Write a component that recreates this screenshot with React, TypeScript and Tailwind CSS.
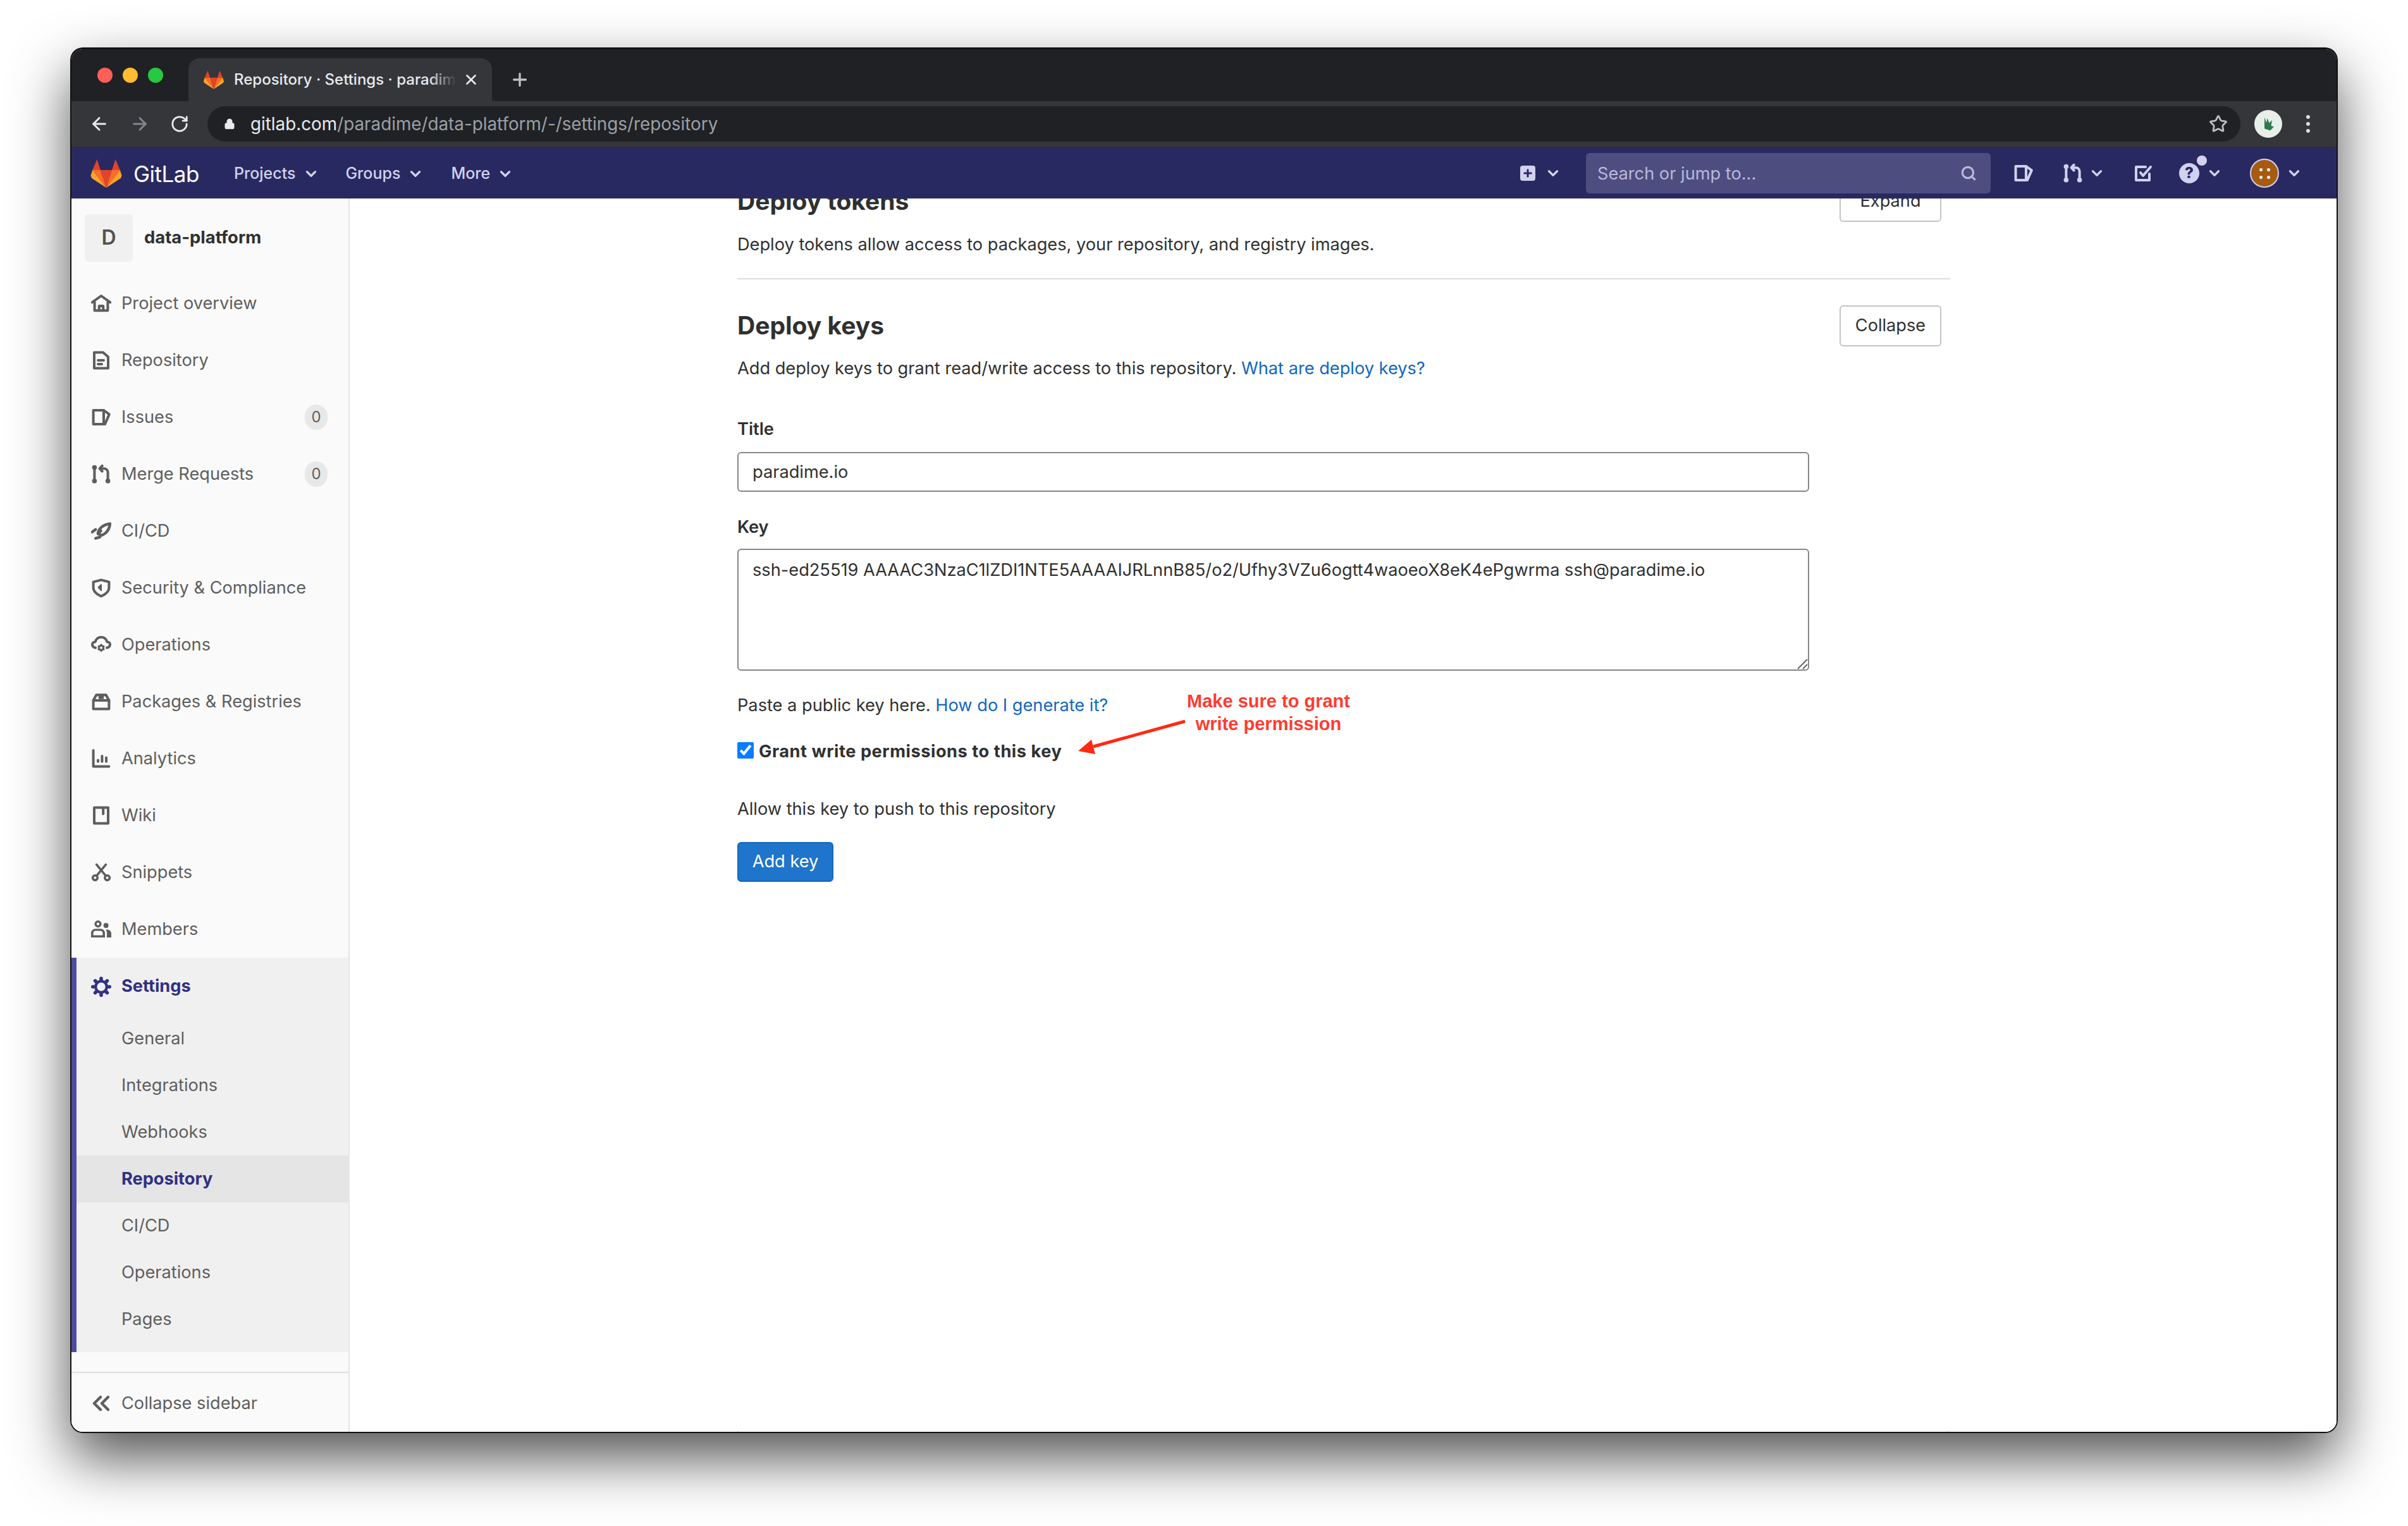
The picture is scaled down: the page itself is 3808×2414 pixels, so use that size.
import React from 'react';
import { ArrowLeft, ArrowRight, RotateCw, Lock, Star, Plus, X, Search, ChevronDown } from 'lucide-react';

type IconProps = { className?: string };

const Svg: React.FC<React.PropsWithChildren<{ className?: string; sw?: number }>> = ({ className, sw = 2, children }) => (
  <svg viewBox="0 0 16 16" fill="none" stroke="currentColor" strokeWidth={sw} strokeLinecap="round" strokeLinejoin="round" className={className}>
    {children}
  </svg>
);

const HomeIcon = ({ className }: IconProps) => (
  <Svg className={className}>
    <path d="M.8 7.2 8 2l7.2 5.2" />
    <path d="M2.8 7v6.6h10.4V7" />
    <path d="M6.4 13.6V10h3.2v3.6" />
  </Svg>
);
const DocIcon = ({ className }: IconProps) => (
  <Svg className={className}>
    <path d="M2.5 1.8h7l4 3.4v9h-11z" />
    <path d="M5.5 8h4.5M5.5 11h3" />
  </Svg>
);
const IssuesIcon = ({ className }: IconProps) => (
  <Svg className={className}>
    <path d="M1.8 2.5h8.2v11H1.8z" />
    <path d="M10 2.5l4.4 3.2-3.4 7.8" />
  </Svg>
);
const MergeIcon = ({ className }: IconProps) => (
  <Svg className={className}>
    <circle cx="2.7" cy="2.8" r=".9" />
    <circle cx="2.7" cy="13.4" r=".9" />
    <circle cx="13.3" cy="13.4" r=".9" />
    <path d="M2.7 3.5v9.2" />
    <path d="M8 3.6h2.2c1.8 0 3.1 1.2 3.1 3v6" />
    <path d="M8.8 1.4 6.8 3.6l2 2.2" />
  </Svg>
);
const RocketIcon = ({ className }: IconProps) => (
  <Svg className={className} sw={2.2}>
    <path d="M5.4 9.6C6.5 5.5 10 3 15 2.2c-.6 4.8-3 8-7.1 9.3z" />
    <path d="M1 8.8l2.6-2M3.6 13.8l3.4-1" />
    <path d="M5.6 10.4l2.2-2.6" />
  </Svg>
);
const ShieldIcon = ({ className }: IconProps) => (
  <Svg className={className}>
    <path d="M8 1.7 14.2 3.3V8c0 3-2.6 5-6.2 6.6C4.4 13 1.8 11 1.8 8V3.3z" />
    <path d="M8 5.5 5.8 7.5 8 10z" fill="currentColor" strokeWidth="1" />
  </Svg>
);
const CloudIcon = ({ className }: IconProps) => (
  <Svg className={className}>
    <path d="M3.5 10.4C1.6 10 1 8.8 1 7.9c0-1.3 1.1-2.3 2.4-2.3C3.9 3.3 5.8 2 8 2s4.1 1.3 4.6 3.6c1.3 0 2.4 1 2.4 2.3 0 .9-.6 2.1-2.5 2.5" />
    <circle cx="8" cy="10.4" r="1.8" strokeWidth="1.6" />
    <path d="M8 7.8v.5M8 12.500v.5M5.8 9.100l.4.3M9.800 11.400l.4.3M5.8 11.700l.4-.3M9.800 9.400l.4-.3" strokeWidth="1.2" />
  </Svg>
);
const PackageIcon = ({ className }: IconProps) => (
  <Svg className={className}>
    <path d="M1.8 7v6.8h12.4V7L11.8 2.6H4.2z" />
    <path d="M1.8 7h12.4" />
    <path d="M6.4 2.6h3.2v2.8H6.4z" strokeWidth="1" fill="currentColor" />
  </Svg>
);
const ChartIcon = ({ className }: IconProps) => (
  <Svg className={className}>
    <path d="M1.8 1.5v12.7h12.4" />
    <path d="M5.5 9.2v1.2M8.7 6v4.4M12 7.2v3.2" />
  </Svg>
);
const BookIcon = ({ className }: IconProps) => (
  <Svg className={className}>
    <path d="M2.5 1.8h11v12.4h-11z" />
    <path d="M9.6 2v4.8" />
  </Svg>
);
const ScissorsIcon = ({ className }: IconProps) => (
  <Svg className={className} sw={1.8}>
    <circle cx="3.2" cy="12.3" r="1.9" />
    <circle cx="12.8" cy="12.3" r="1.9" />
    <path d="M4.3 1.8l7.3 8.9M11.7 1.8 4.4 10.7" />
  </Svg>
);
const MembersIcon = ({ className }: IconProps) => (
  <svg viewBox="0 0 16 16" fill="currentColor" className={className}>
    <path fillRule="evenodd" d="M5.5 1a2.8 2.8 0 1 1 0 5.6 2.8 2.8 0 0 1 0-5.6zm0 1.7a1.1 1.1 0 1 0 0 2.2 1.1 1.1 0 0 0 0-2.2z" />
    <circle cx="11.8" cy="5" r="2" />
    <path fillRule="evenodd" d="M0 14.5V11c0-2 1.6-3.4 3.6-3.4h3.8c2 0 3.6 1.4 3.6 3.4v3.5zm1.8-1.7h7.4V11c0-1-.8-1.7-1.8-1.7H3.6c-1 0-1.8.7-1.8 1.7z" />
    <path d="M11.7 8.2h.8c2 0 3.500 1.300 3.500 3.200v3.100h-3.500V11c0-1-.3-2-.8-2.800z" />
  </svg>
);
const CogIcon = ({ className }: IconProps) => (
  <Svg className={className} sw={2.1}>
    <circle cx="8" cy="8" r="4.4" />
    <path strokeWidth="2.8" d="M8 1.4v.4M8 14.2v.4M1.4 8h.4M14.2 8h.4M3.3 3.3l.3.3M12.4 12.4l.3.3M3.3 12.7l.3-.3M12.4 3.6l.3-.3" />
  </Svg>
);
const ChevronsIcon = ({ className }: IconProps) => (
  <Svg className={className} sw={2.2}>
    <path d="M7.5 3 2.5 8l5 5M13.5 3l-5 5 5 5" />
  </Svg>
);
const TodoIcon = ({ className }: IconProps) => (
  <Svg className={className}>
    <path d="M13 8.5V13.5H2.5V3H10" />
    <path d="M6 7.5 8 10l6-7" />
  </Svg>
);

const Tanuki = ({ className }: IconProps) => (
  <svg viewBox="0 0 32 30" className={className}>
    <polygon points="16,30 21.9,11.8 10.1,11.8" fill="#e24329" />
    <polygon points="16,30 10.1,11.8 1.8,11.8" fill="#fc6d26" />
    <polygon points="1.8,11.8 0,17.3 .9,20 16,30" fill="#fca326" />
    <polygon points="1.8,11.8 10.1,11.8 6.5,.7" fill="#e24329" />
    <polygon points="16,30 21.9,11.8 30.2,11.8" fill="#fc6d26" />
    <polygon points="30.2,11.8 32,17.3 31.1,20 16,30" fill="#fca326" />
    <polygon points="30.2,11.8 21.9,11.8 25.5,.7" fill="#e24329" />
  </svg>
);

const navItems = [
  { label: 'Project overview', Icon: HomeIcon },
  { label: 'Repository', Icon: DocIcon },
  { label: 'Issues', Icon: IssuesIcon, badge: '0' },
  { label: 'Merge Requests', Icon: MergeIcon, badge: '0' },
  { label: 'CI/CD', Icon: RocketIcon },
  { label: 'Security & Compliance', Icon: ShieldIcon },
  { label: 'Operations', Icon: CloudIcon },
  { label: 'Packages & Registries', Icon: PackageIcon },
  { label: 'Analytics', Icon: ChartIcon },
  { label: 'Wiki', Icon: BookIcon },
  { label: 'Snippets', Icon: ScissorsIcon },
  { label: 'Members', Icon: MembersIcon },
];

const subItems = ['General', 'Integrations', 'Webhooks', 'Repository', 'CI/CD', 'Operations', 'Pages'];

const Sidebar = () => (
  <aside className="w-[440px] shrink-0 flex flex-col bg-[#fafafa] border-r-2 border-[#e5e5e5] text-[#5e5e5e] text-[27.2px]">
    <div className="flex items-center h-[112px] pt-[12px] pl-[21px] gap-[18px]">
      <div className="w-[76px] h-[75px] rounded-[6px] bg-[#f0f0f0] flex items-center justify-center text-[#525252] text-[32px] font-semibold">D</div>
      <span className="text-[#303030] font-bold text-[27.4px]">data-platform</span>
    </div>
    <div className="flex flex-col mt-[9px]">
      {navItems.map(({ label, Icon, badge }) => (
        <div key={label} className="h-[90px] flex items-center pl-[31px] pr-[33px]">
          <Icon className="w-[32px] h-[32px] shrink-0" />
          <span className="ml-[16px] flex-1">{label}</span>
          {badge && <span className="w-[36px] h-[40px] rounded-full bg-[#e8e8e8] flex items-center justify-center text-[24px]">{badge}</span>}
        </div>
      ))}
    </div>
    <div className="border-l-8 border-[#4f4ca3] bg-[#f0f0f0] flex flex-col pb-[15px]">
      <div className="h-[91px] flex items-center pl-[23px] text-[#303084] font-bold">
        <CogIcon className="w-[32px] h-[32px]" />
        <span className="ml-[16px]">Settings</span>
      </div>
      {subItems.map((s, i) =>
        i === 3 ? (
          <div key={i} className="h-[74px] flex items-center pl-[71px] bg-[#e5e5e5] text-[#303084] font-bold">{s}</div>
        ) : (
          <div key={i} className="h-[74px] flex items-center pl-[71px]">{s}</div>
        )
      )}
    </div>
    <div className="mt-auto h-[95px] pt-[3px] border-t-2 border-[#dfdfdf] flex items-center pl-[31px]">
      <ChevronsIcon className="w-[32px] h-[32px]" />
      <span className="ml-[16px]">Collapse sidebar</span>
    </div>
  </aside>
);

const DeployForm = () => (
  <div className="relative w-[1918px] ml-[613px] -mt-[28px] text-[27.2px] text-[#303030]">
    <div className="flex items-center justify-between h-[65px] pr-[14px]">
      <h2 className="text-[39px] font-bold">Deploy tokens</h2>
      <button className="w-[161px] h-[65px] rounded-[6px] border-2 border-[#c4c4c4] bg-white">Expand</button>
    </div>
    <p className="mt-[18px] h-[36px] leading-[36px]">Deploy tokens allow access to packages, your repository, and registry images.</p>
    <div className="mt-[35px] border-t-2 border-[#dcdcdc]" />
    <div className="mt-[41px] flex items-center justify-between h-[65px] pr-[14px]">
      <h2 className="text-[39px] font-bold">Deploy keys</h2>
      <button className="w-[161px] h-[65px] rounded-[6px] border-2 border-[#c4c4c4] bg-white">Collapse</button>
    </div>
    <p className="mt-[17px] h-[36px] leading-[36px]">
      Add deploy keys to grant read/write access to this repository. <a className="text-[#1068bf]">What are deploy keys?</a>
    </p>
    <label className="block mt-[60px] h-[36px] leading-[36px] font-semibold">Title</label>
    <input
      readOnly
      value="paradime.io"
      className="block mt-[18px] w-[1695px] h-[63px] px-[22px] rounded-[6px] border-2 border-[#868686] bg-white outline-none"
    />
    <label className="block mt-[38px] h-[36px] leading-[36px] font-semibold">Key</label>
    <div className="relative mt-[16px] w-[1695px] h-[193px]">
      <textarea
        readOnly
        value="ssh-ed25519 AAAAC3NzaC1lZDI1NTE5AAAAIJRLnnB85/o2/Ufhy3VZu6ogtt4waoeoX8eK4ePgwrma ssh@paradime.io"
        className="block w-full h-full px-[22px] py-[14px] rounded-[6px] border-2 border-[#868686] bg-white outline-none leading-[36px] resize-none"
      />
      <svg viewBox="0 0 20 20" className="absolute right-[2px] bottom-[2px] w-[20px] h-[20px]">
        <path d="M19 4 4 19M19 12l-7 7" stroke="#666" strokeWidth="2" fill="none" />
      </svg>
    </div>
    <p className="mt-[37px] h-[36px] leading-[36px]">
      Paste a public key here. <a className="text-[#1068bf]">How do I generate it?</a>
    </p>
    <div className="mt-[37px] h-[36px] flex items-center gap-[8px]">
      <input type="checkbox" readOnly checked className="w-[26px] h-[26px] m-0 mb-[5px] accent-[#0a7cff]" />
      <span className="font-bold tracking-[0.55px]">Grant write permissions to this key</span>
    </div>
    <p className="mt-[55px] h-[36px] leading-[36px]">Allow this key to push to this repository</p>
    <button className="block mt-[34px] w-[152px] h-[63px] rounded-[6px] bg-[#1f75cb] border-2 border-[#1068bf] text-white">Add key</button>
    <div className="mt-[869px] w-[1915px] h-[20px] border-x-2 border-[#dcdcdc]" />

    <div className="absolute left-[710px] top-[805px] text-center text-[#ff3b30] font-bold text-[29px] leading-[36px] font-[family-name:'Liberation_Sans',sans-serif] w-[260px]">
      Make sure to grant<br />write permission
    </div>
    <svg viewBox="0 0 180 60" className="absolute left-[537px] top-[853px] w-[180px] h-[60px]">
      <path d="M171 2 L26 42" stroke="#ff2a12" strokeWidth="5" fill="none" />
      <path d="M2 49 L23 31 L29 54 Z" fill="#ff2a12" />
    </svg>
  </div>
);

const ChromeBar = () => (
  <>
    <div className="h-[82px] bg-[#202124] flex items-end">
      <div className="flex items-center gap-[16px] pl-[41px] w-[185px] h-full">
        <span className="w-[24px] h-[24px] rounded-full bg-[#ff5f57]" />
        <span className="w-[24px] h-[24px] rounded-full bg-[#febc2e]" />
        <span className="w-[24px] h-[24px] rounded-full bg-[#28c840]" />
      </div>
      <div className="w-[480px] h-[68px] rounded-t-[18px] bg-[#35363a] flex items-center pl-[24px] relative">
        <Tanuki className="w-[32px] h-[30px]" />
        <span className="ml-[16px] w-[350px] overflow-hidden whitespace-nowrap text-[24px] text-[#e8eaed] font-medium">Repository · Settings · paradime</span>
        <span className="absolute left-[380px] top-0 w-[44px] h-full bg-gradient-to-r from-transparent to-[#35363a]" />
        <X className="absolute left-[434px] w-[26px] h-[26px] text-[#e8eaed]" strokeWidth={2.5} />
      </div>
      <div className="ml-[28px] h-[68px] flex items-center">
        <Plus className="w-[32px] h-[32px] text-[#bdc1c6]" strokeWidth={2.5} />
      </div>
    </div>
    <div className="h-[74px] bg-[#35363a] flex items-center border-b-2 border-[#2c2d30]">
      <div className="w-[215px] flex items-center pl-[28px] gap-[32px] text-[#e8eaed]">
        <ArrowLeft className="w-[32px] h-[32px]" strokeWidth={2.2} />
        <ArrowRight className="w-[32px] h-[32px] text-[#80868b]" strokeWidth={2.2} />
        <RotateCw className="w-[30px] h-[30px]" strokeWidth={2.2} />
      </div>
      <div className="w-[3215px] h-[56px] rounded-full bg-[#202124] flex items-center pl-[26px] pr-[20px] text-[27.8px]">
        <Lock className="w-[18px] h-[24px] text-[#e8eaed]" fill="currentColor" strokeWidth={2} />
        <span className="ml-[24px] pt-[2px] text-[#e8eaed]">gitlab.com<span className="text-[#9aa0a6]">/paradime/data-platform/-/settings/repository</span></span>
        <Star className="ml-auto w-[30px] h-[30px] text-[#bdc1c6]" strokeWidth={2.2} />
      </div>
      <div className="ml-[22px] w-[44px] h-[44px] rounded-full bg-[#e8eee9] flex items-center justify-center">
        <svg viewBox="0 0 20 20" className="w-[30px] h-[30px]">
          <path d="M6 3l2 6 1-5 2 5 3-3-1 6 3 1-4 4-6-2z" fill="#2f7a4a" />
        </svg>
      </div>
      <div className="ml-[38px] flex flex-col gap-[5px]">
        <span className="w-[6px] h-[6px] rounded-full bg-[#dadce0]" />
        <span className="w-[6px] h-[6px] rounded-full bg-[#dadce0]" />
        <span className="w-[6px] h-[6px] rounded-full bg-[#dadce0]" />
      </div>
    </div>
  </>
);

const TopNav = () => (
  <nav className="h-[80px] shrink-0 bg-[#292961] flex items-center text-[#d1d1f0]">
    <Tanuki className="ml-[30px] w-[50px] h-[46px]" />
    <span className="ml-[18px] pt-[2px] text-white text-[35px] font-normal tracking-[-0.5px]">GitLab</span>
    <div className="ml-[55px] pt-[2px] flex items-center text-[25px] font-medium">
      <span>Projects</span>
      <ChevronDown className="ml-[12px] w-[26px] h-[26px]" strokeWidth={3} />
      <span className="ml-[41px]">Groups</span>
      <ChevronDown className="ml-[11px] w-[26px] h-[26px]" strokeWidth={3} />
      <span className="ml-[43px]">More</span>
      <ChevronDown className="ml-[11px] w-[26px] h-[26px]" strokeWidth={3} />
    </div>
    <div className="ml-auto flex items-center pr-[54px]">
      <span className="w-[24px] h-[24px] rounded-[4px] bg-[#d1d1f0] flex items-center justify-center">
        <Plus className="w-[18px] h-[18px] text-[#292961]" strokeWidth={4} />
      </span>
      <ChevronDown className="ml-[15px] w-[26px] h-[26px]" strokeWidth={3} />
      <div className="ml-[39px] w-[640px] h-[64px] rounded-[6px] bg-[#4d4d80] flex items-center pl-[18px] pr-[22px] text-[#b8b8dd] text-[27.2px]">
        <span className="flex-1 pt-[2px]">Search or jump to...</span>
        <Search className="w-[26px] h-[26px]" strokeWidth={3} />
      </div>
      <IssuesIcon className="ml-[36px] w-[32px] h-[32px]" />
      <MergeIcon className="ml-[46px] w-[32px] h-[32px]" />
      <ChevronDown className="ml-[9px] w-[26px] h-[26px]" strokeWidth={3} />
      <TodoIcon className="ml-[44px] w-[32px] h-[32px]" />
      <div className="ml-[41px] relative w-[32px] h-[32px] rounded-full bg-[#d1d1f0] flex items-center justify-center text-[#292961] text-[24px] font-extrabold leading-none">
        ?
        <span className="absolute -right-[12px] -top-[12px] w-[16px] h-[16px] rounded-full bg-[#d1d1f0]" />
      </div>
      <ChevronDown className="ml-[11px] w-[26px] h-[26px]" strokeWidth={3} />
      <div className="ml-[43px] w-[46px] h-[46px] rounded-full border-2 border-[#d1d1f0] bg-[#a65b0f] grid grid-cols-2 gap-[6px] place-items-center p-[12px]">
        <span className="w-[5px] h-[5px] rounded-full bg-white" />
        <span className="w-[5px] h-[5px] rounded-full bg-white" />
        <span className="w-[5px] h-[5px] rounded-full bg-white" />
        <span className="w-[5px] h-[5px] rounded-full bg-white" />
      </div>
      <ChevronDown className="ml-[11px] w-[26px] h-[26px]" strokeWidth={3} />
    </div>
  </nav>
);

export default function App() {
  return (
    <div className="w-[3808px] h-[2414px] overflow-hidden bg-white pt-[75px] pl-[111px] font-[family-name:Inter,sans-serif]">
      <div className="w-[3586px] h-[2192px] rounded-[20px] overflow-hidden flex flex-col border-2 border-t-[3px] border-[#111] shadow-[0_40px_90px_rgba(0,0,0,0.68)]">
        <ChromeBar />
        <TopNav />
        <div className="flex-1 min-h-0 flex">
          <Sidebar />
          <main className="flex-1 min-w-0 overflow-hidden bg-white">
            <DeployForm />
          </main>
        </div>
      </div>
    </div>
  );
}
